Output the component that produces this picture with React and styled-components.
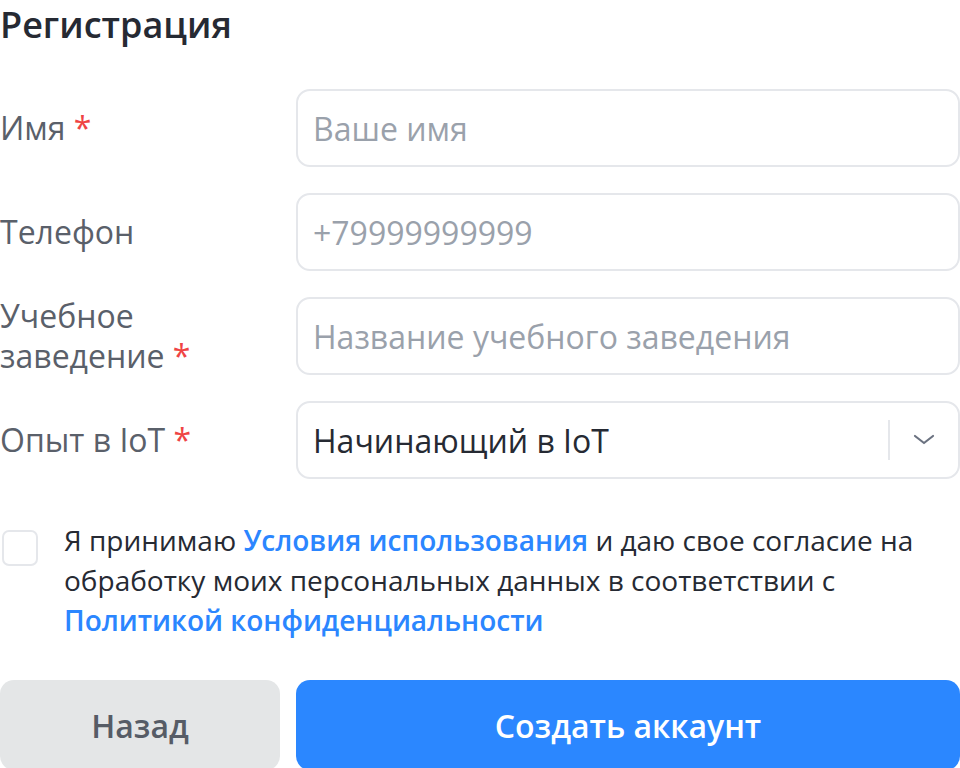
import React from "react";
import styled, { createGlobalStyle } from "styled-components";

const GlobalStyle = createGlobalStyle`
  body {
    margin: 0;
    background: #ffffff;
    font-family: "Open Sans", "Noto Sans", sans-serif;
  }
  * {
    box-sizing: border-box;
  }
`;

export default function App() {
  return (
    <>
      <GlobalStyle />
      <Page>
        <Title>Регистрация</Title>
        <Fields>
          <Row>
            <Label>
              Имя <Required>*</Required>
            </Label>
            <TextInput placeholder='Ваше имя' />
          </Row>
          <Row>
            <Label>Телефон</Label>
            <TextInput placeholder='+79999999999' />
          </Row>
          <Row>
            <Label>
              Учебное заведение <Required>*</Required>
            </Label>
            <TextInput placeholder='Название учебного заведения' />
          </Row>
          <Row>
            <Label>
              Опыт в IoT <Required>*</Required>
            </Label>
            <Select>
              <SelectValue>Начинающий в IoT</SelectValue>
              <Divider />
              <Chevron>
                <svg width='24' height='24' viewBox='0 0 24 24' fill='none'>
                  <path
                    d='M3 8l9 7 9-7'
                    stroke='#6b7280'
                    strokeWidth='2.2'
                    strokeLinecap='round'
                    strokeLinejoin='round'
                  />
                </svg>
              </Chevron>
            </Select>
          </Row>
        </Fields>

        <Consent>
          <Checkbox type='checkbox' />
          <ConsentText>
            Я принимаю <Link href='#'>Условия использования</Link> и даю свое
            согласие на обработку моих персональных данных в соответствии с{" "}
            <Link href='#'>Политикой конфиденциальности</Link>
          </ConsentText>
        </Consent>

        <Actions>
          <Button variant='secondary'>Назад</Button>
          <Button variant='primary'>Создать аккаунт</Button>
        </Actions>
      </Page>
    </>
  );
}

const Page = styled.div`
  width: 960px;
  height: 768px;
  overflow: hidden;
`;

const Title = styled.h1`
  margin: 0;
  font-size: 36px;
  line-height: 50px;
  font-weight: 600;
  color: #262a33;
`;

const Fields = styled.div`
  display: flex;
  flex-direction: column;
  gap: 26px;
  margin-top: 39px;
`;

const Row = styled.div`
  display: grid;
  grid-template-columns: 280px 1fr;
  grid-auto-rows: 78px;
  column-gap: 16px;
  align-items: center;
`;

const Label = styled.label`
  font-size: 32px;
  line-height: 40px;
  color: #5a606a;
`;

const Required = styled.span`
  color: #ef4444;
`;

const TextInput = styled.input`
  height: 78px;
  width: 100%;
  padding: 0 15px;
  border: 2px solid #e5e7eb;
  border-radius: 14px;
  font-family: inherit;
  font-size: 32px;
  color: #1f2937;
  outline: none;

  &::placeholder {
    color: #9aa1ab;
  }
`;

const Select = styled.div`
  display: flex;
  align-items: center;
  height: 78px;
  padding: 0 0 0 15px;
  border: 2px solid #e5e7eb;
  border-radius: 14px;
`;

const SelectValue = styled.span`
  flex: 1;
  font-size: 32px;
  color: #262a33;
`;

const Divider = styled.span`
  width: 2px;
  height: 40px;
  background: #e5e7eb;
`;

const Chevron = styled.span`
  display: flex;
  align-items: center;
  justify-content: center;
  width: 68px;
`;

const Consent = styled.div`
  display: flex;
  align-items: flex-start;
  gap: 26px;
  margin-top: 41px;
`;

const Checkbox = styled.input`
  appearance: none;
  flex-shrink: 0;
  width: 36px;
  height: 36px;
  margin: 10px 0 0 2px;
  border: 2px solid #e5e7eb;
  border-radius: 7px;
  background: #ffffff;
`;

const ConsentText = styled.p`
  margin: 0;
  font-size: 28px;
  line-height: 40px;
  color: #262a33;
`;

const Link = styled.a`
  color: #2b86ff;
  font-weight: 600;
  text-decoration: none;
`;

const Actions = styled.div`
  display: grid;
  grid-template-columns: 280px 1fr;
  column-gap: 16px;
  margin-top: 40px;
`;

const Button = styled.button`
  height: 90px;
  border: none;
  border-radius: 14px;
  font-family: inherit;
  font-size: 32px;
  font-weight: 600;
  cursor: pointer;
  background: ${({ variant }) =>
    variant === "primary" ? "#2b87ff" : "#e4e6e7"};
  color: ${({ variant }) => (variant === "primary" ? "#ffffff" : "#565c66")};
`;
